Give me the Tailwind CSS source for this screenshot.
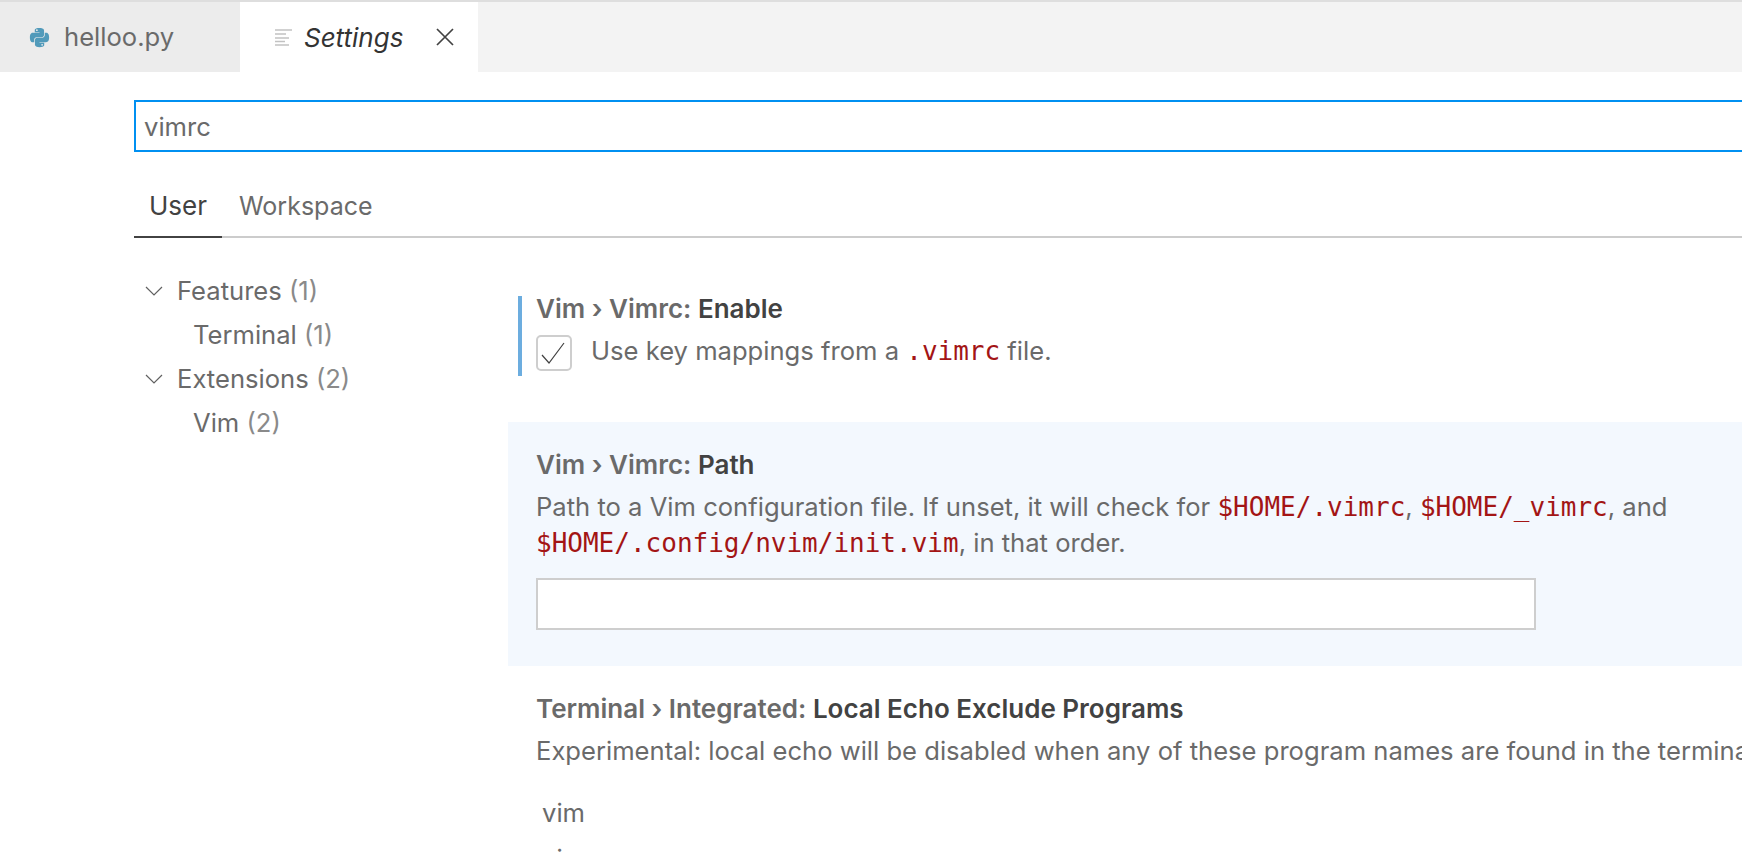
<!DOCTYPE html>
<html lang="en">
<head>
  <meta charset="UTF-8" />
  <title>Settings</title>
  <script src="https://cdn.jsdelivr.net/npm/@tailwindcss/browser@4"></script>
</head>
<body class="bg-white h-[852px] overflow-hidden font-['Inter',sans-serif] text-[#6a6a6a]">

<!-- tab bar -->
<div class="border-t-2 border-[#dedede] h-[72px] bg-[#f3f3f3] flex">
  <div class="w-[240px] bg-[#ececec] flex items-center pl-[29px] gap-[14px] text-[25.6px]">
    <svg class="w-[21px] h-[21px]" viewBox="0 0 24 24" fill="#519aba">
      <path d="M11.900 1C6.300 1 6.600 3.400 6.600 3.400v2.500h5.400v.8H4.500S1 6.300 1 12s3.100 5.500 3.100 5.500H6v-2.700s-.1-3.100 3-3.100h5.300s2.900 0 2.900-2.800V4.100S17.700 1 11.900 1zM9 2.700a1 1 0 1 1 0 2 1 1 0 0 1 0-2z"/>
      <path d="M12.100 23c5.600 0 5.300-2.400 5.300-2.400v-2.500H12v-.8h7.500S23 17.700 23 12s-3.100-5.500-3.100-5.500H18v2.700s.1 3.100-3 3.100H9.700s-2.900 0-2.900 2.800v4.800S6.300 23 12.100 23zm2.900-1.700a1 1 0 1 1 0-2 1 1 0 0 1 0 2z"/>
    </svg>
    <span>helloo.py</span>
  </div>
  <div class="w-[238px] bg-white flex items-center pl-[35px] text-[#333333] text-[26px]">
    <svg class="w-[17px] h-[17px] mr-[12px]" viewBox="0 0 17 17" stroke="#c2c2c2" stroke-width="1.500" fill="none">
      <path d="M0 1h17M0 5h11M0 9h14M0 12.500h10M0 16h14"/>
    </svg>
    <span class="italic">Settings</span>
    <svg class="w-[18px] h-[18px] ml-[33px]" viewBox="0 0 18 18" stroke="#424242" stroke-width="1.700" fill="none">
      <path d="M1 1l16 16M17 1L1 17"/>
    </svg>
  </div>
</div>

<div class="pl-[134px]">
  <!-- search -->
  <div class="mt-[28px] h-[52px] border-2 border-r-0 border-[#0090f1] flex items-center pl-[8px] pt-[3px] text-[25.6px]">vimrc</div>

  <!-- user / workspace tabs -->
  <div class="mt-[22px] h-[64px] border-b-2 border-[#cccccc] flex text-[25px]">
    <div class="w-[88px] h-[64px] border-b-2 border-[#424242] text-[#424242] flex items-center justify-center text-[26px]">User</div>
    <div class="ml-[17px] h-[62px] flex items-center pt-[3px]">Workspace</div>
  </div>
</div>

<div class="flex pl-[134px]">
  <!-- tree -->
  <div class="w-[374px] pt-[31px] text-[25.6px] shrink-0">
    <div class="h-[44px] flex items-center pl-[11px]">
      <svg class="w-[18px] h-[10px] mr-[14px]" viewBox="0 0 18 10" stroke="#616161" stroke-width="1.200" fill="none"><path d="M1 1l8 8 8-8"/></svg>
      <span>Features <span class="text-[#8a8a8a]">(1)</span></span>
    </div>
    <div class="h-[44px] flex items-center pl-[59px]"><span>Terminal <span class="text-[#8a8a8a]">(1)</span></span></div>
    <div class="h-[44px] flex items-center pl-[11px]">
      <svg class="w-[18px] h-[10px] mr-[14px]" viewBox="0 0 18 10" stroke="#616161" stroke-width="1.200" fill="none"><path d="M1 1l8 8 8-8"/></svg>
      <span>Extensions <span class="text-[#8a8a8a]">(2)</span></span>
    </div>
    <div class="h-[44px] flex items-center pl-[59px]"><span>Vim <span class="text-[#8a8a8a]">(2)</span></span></div>
  </div>

  <!-- settings list -->
  <div class="flex-1 text-[25.6px]">
    <div class="mt-[58px] ml-[10px] h-[80px] border-l-4 border-[#6caddf] pl-[14px]">
      <div class="h-[26px] leading-[26px] font-semibold text-[26px]">Vim › Vimrc: <span class="text-[#424242]">Enable</span></div>
      <div class="flex items-center mt-[10px]">
        <div class="w-[36px] h-[36px] border-2 border-[#cecece] rounded-[5px] flex items-center justify-center">
          <svg class="w-[26px] h-[26px]" viewBox="0 0 26 26" stroke="#424242" stroke-width="1.200" fill="none"><path d="M1 15l7 8L23 3"/></svg>
        </div>
        <span class="ml-[19px] pb-[2px]">Use key mappings from a <code class="font-['DejaVu_Sans_Mono',monospace] text-[#a31515] text-[26px]">.vimrc</code> file.</span>
      </div>
    </div>

    <div class="mt-[46px] h-[244px] bg-[#f3f8fe] pl-[28px] pt-[30px]">
      <div class="h-[26px] leading-[26px] font-semibold text-[26px]">Vim › Vimrc: <span class="text-[#424242]">Path</span></div>
      <p class="mt-[11px] leading-[36px] w-[1200px]">Path to a Vim configuration file. If unset, it will check for <code class="font-['DejaVu_Sans_Mono',monospace] text-[#a31515] text-[26px]">$HOME/.vimrc</code>, <code class="font-['DejaVu_Sans_Mono',monospace] text-[#a31515] text-[26px]">$HOME/_vimrc</code>, and <code class="font-['DejaVu_Sans_Mono',monospace] text-[#a31515] text-[26px]">$HOME/.config/nvim/init.vim</code>, in that order.</p>
      <div class="mt-[17px] w-[1000px] h-[52px] bg-white border-2 border-[#cecece]"></div>
    </div>

    <div class="pl-[28px] pt-[30px]">
      <div class="h-[26px] leading-[26px] font-semibold text-[26px] whitespace-nowrap">Terminal › Integrated: <span class="text-[#424242]">Local Echo Exclude Programs</span></div>
      <p class="mt-[11px] leading-[36px] whitespace-nowrap">Experimental: local echo will be disabled when any of these program names are found in the terminal title.</p>
      <div class="mt-[26px] pl-[6px] leading-[36px]">vim</div>
      <div class="mt-[10px] pl-[6px] leading-[36px]">vi</div>
    </div>
  </div>
</div>

</body>
</html>
